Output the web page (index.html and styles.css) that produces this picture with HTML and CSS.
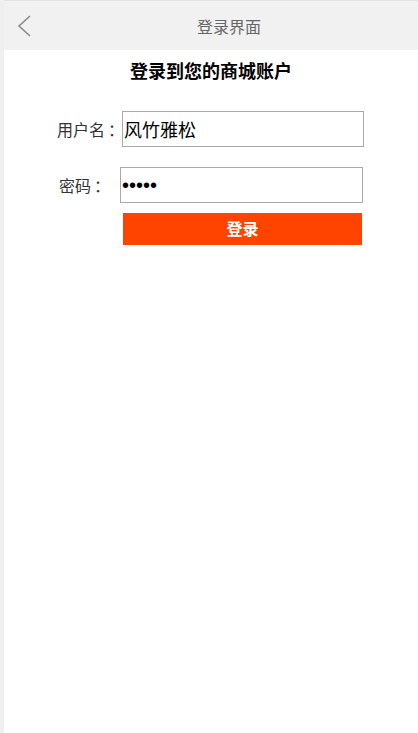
FILE: index.html
```html
<!DOCTYPE html>
<html lang="zh-CN">
<head>
<meta charset="utf-8">
<title>登录界面</title>
<link rel="stylesheet" href="styles.css">
</head>
<body>
<div class="page">
  <header class="topbar">
    <a class="back" href="#" aria-label="返回">
      <svg width="16" height="24" viewBox="0 0 16 24"><polyline points="13,2 2,12 13,22" fill="none" stroke="#8a8a8a" stroke-width="1.6"/></svg>
    </a>
    <div class="title">登录界面</div>
  </header>
  <h1 class="heading">登录到您的商城账户</h1>
  <form class="form">
    <div class="row row-user">
      <label class="label label-user">用户名<span class="colon">：</span></label>
      <input class="field field-user" type="text" value="风竹雅松">
    </div>
    <div class="row row-pass">
      <label class="label label-pass">密码<span class="colon">：</span></label>
      <input class="field field-pass" type="password" value="12345">
    </div>
    <button class="submit" type="button">登录</button>
  </form>
</div>
</body>
</html>
```

FILE: styles.css
```css
html, body {
  margin: 0;
  padding: 0;
  background: #fff;
  font-family: "Noto Sans CJK SC", "Noto Sans", sans-serif;
}
.page {
  min-height: 733px;
  box-sizing: border-box;
  border-left: 4px solid #efefef;
}
.topbar {
  height: 50px;
  box-sizing: border-box;
  border-top: 1px solid #e3e3e3;
  background: #f1f1f1;
  display: flex;
  align-items: center;
}
.back {
  width: 36px;
  height: 49px;
  display: flex;
  align-items: center;
  justify-content: flex-start;
  padding-left: 13px;
  box-sizing: border-box;
}
.back svg { display: block; }
.title {
  flex: 1;
  text-align: center;
  font-size: 16px;
  color: #666;
  line-height: 20px;
}
.heading {
  margin: 8px 0 0;
  font-size: 18px;
  line-height: 24px;
  font-weight: bold;
  text-align: center;
  color: #000;
}
.form {
  margin: 0;
  padding-top: 29px;
}
.row {
  display: flex;
  align-items: center;
}
.row-user { padding-left: 53px; }
.row-pass { padding-left: 55px; margin-top: 20px; }
.label {
  flex-shrink: 0;
  white-space: nowrap;
  font-size: 16px;
  color: #333;
  line-height: 20px;
}
.colon { margin-left: 3px; }
.label-user { width: 65px; }
.label-pass { width: 61px; }
.field {
  box-sizing: border-box;
  flex-shrink: 0;
  height: 36px;
  border: 1px solid #a9a9a9;
  padding: 0 1px;
  font-family: "Noto Sans CJK SC", "Noto Sans", sans-serif;
  font-size: 18px;
  color: #000;
  background: #fff;
  outline: none;
  margin: 0;
}
.field-user { width: 242px; }
.field-pass {
  width: 243px;
  font-family: "Liberation Sans", Arial, sans-serif;
  font-size: 20px;
}
.submit {
  display: block;
  margin: 10px 0 0 119px;
  width: 239px;
  height: 32px;
  border: none;
  background: #ff4400;
  color: #fff;
  font-family: "Noto Sans CJK SC", "Noto Sans", sans-serif;
  font-size: 16px;
  font-weight: bold;
  line-height: 30px;
  padding: 0 0 2px;
}
```
